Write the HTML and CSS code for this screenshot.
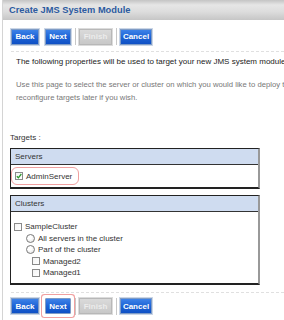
FILE: index.html
```html
<!DOCTYPE html>
<html lang="en">
<head>
    <meta charset="UTF-8">
    <title>Create JMS System Module</title>
    <link rel="stylesheet" href="styles.css">
</head>
<body>
    <div class="page">
        <div class="page-header">
            <h1 class="page-title">Create JMS System Module</h1>
        </div>

        <div class="button-bar">
            <button class="wiz-button">Back</button>
            <button class="wiz-button">Next</button>
            <span class="button-sep"></span>
            <button class="wiz-button disabled">Finish</button>
            <span class="button-sep"></span>
            <button class="wiz-button">Cancel</button>
        </div>

        <p class="intro">The following properties will be used to target your new JMS system module</p>
        <p class="help">Use this page to select the server or cluster on which you would like to deploy the<br>reconfigure targets later if you wish.</p>

        <div class="targets-label">Targets :</div>

        <div class="target-box">
            <div class="target-head">Servers</div>
            <div class="target-body servers">
                <div class="target-row highlight">
                    <span class="check">
                        <svg width="6" height="6" viewBox="0 0 6 6"><path d="M0.8 3.2 L2.4 4.8 L5.3 1" fill="none" stroke="#2d9a2d" stroke-width="1.3"/></svg>
                    </span>
                    AdminServer
                </div>
            </div>
        </div>

        <div class="target-box">
            <div class="target-head">Clusters</div>
            <div class="target-body">
                <div class="target-row"><span class="check"></span> SampleCluster</div>
                <div class="target-row level-1"><span class="radio"></span> All servers in the cluster</div>
                <div class="target-row level-1"><span class="radio"></span> Part of the cluster</div>
                <div class="target-row level-2"><span class="check"></span> Managed2</div>
                <div class="target-row level-2"><span class="check"></span> Managed1</div>
            </div>
        </div>

        <div class="button-bar bottom">
            <button class="wiz-button">Back</button>
            <button class="wiz-button circled">Next</button>
            <span class="button-sep"></span>
            <button class="wiz-button disabled">Finish</button>
            <span class="button-sep"></span>
            <button class="wiz-button">Cancel</button>
        </div>
    </div>
</body>
</html>
```

FILE: styles.css
```css
* {
    margin: 0;
    padding: 0;
    box-sizing: border-box;
}

body {
    font-family: "Liberation Sans", Arial, sans-serif;
    font-size: 8px;
    color: #333;
    background: #fff;
    width: 284px;
    height: 320px;
    overflow: hidden;
}

.page {
    margin-left: 2px;
    border-left: 1px solid #d4d4d4;
    height: 320px;
    overflow: hidden;
}

.page-header {
    height: 20px;
    background: linear-gradient(to bottom, #c4c4c4 0%, #e6e6e6 25%, #dcdcdc 60%, #c6c6c6 100%);
    display: flex;
    align-items: center;
    padding-left: 6px;
}

.page-title {
    font-size: 9.3px;
    font-weight: bold;
    color: #2c5aa0;
    white-space: nowrap;
}

.button-bar {
    display: flex;
    align-items: center;
    margin: 8px 0 0 8px;
    padding-bottom: 6px;
    border-bottom: 1px dashed #e0e0e0;
}

.wiz-button {
    height: 16px;
    margin-right: 6px;
    font-family: inherit;
    font-size: 8px;
    font-weight: bold;
    color: #fff;
    background: linear-gradient(to bottom, #3d82e8 0%, #1e64d6 50%, #0f50c4 100%);
    border: 1px solid #7f9cc6;
    outline: 1px solid #cbd6e6;
}

.wiz-button:nth-of-type(1) {
    width: 28px;
}

.wiz-button:nth-of-type(2) {
    width: 26px;
}

.wiz-button:nth-of-type(3) {
    width: 33px;
}

.wiz-button:nth-of-type(4) {
    width: 32px;
}

.wiz-button.disabled {
    color: #ececec;
    background: linear-gradient(to bottom, #dadada 0%, #c8c8c8 100%);
    border-color: #b8b8b8;
    outline-color: #dcdcdc;
}

.button-sep {
    width: 1px;
    height: 17px;
    margin-right: 3px;
    margin-left: -2px;
    background: #c8c8c8;
}

.intro {
    margin: 5px 0 0 13px;
    white-space: nowrap;
    color: #222;
}

.help {
    margin: 12px 0 0 13px;
    white-space: nowrap;
    font-size: 7.7px;
    color: #777;
    line-height: 13px;
}

.targets-label {
    margin: 29px 0 0 7px;
    color: #333;
}

.target-box {
    width: 250px;
    margin: 6px 0 0 7px;
    border: 1px solid #222;
    border-right: 2px solid #999;
    border-bottom-width: 2px;
}

.target-head {
    height: 16px;
    line-height: 15px;
    padding-left: 4px;
    background: #cfdcf0;
    border-bottom: 1px solid #333;
    color: #333;
}

.target-body {
    display: flex;
    flex-direction: column;
    padding: 9px 0 4px 3px;
}

.target-body.servers {
    padding: 2px 0 2px 0;
}

.target-row {
    display: flex;
    align-items: center;
    gap: 3px;
    height: 11.5px;
    color: #333;
}

.target-row.level-1 {
    padding-left: 12px;
}

.target-row.level-2 {
    padding-left: 18px;
}

.check {
    width: 8px;
    height: 8px;
    border: 1px solid #8a8a8a;
    background: linear-gradient(135deg, #f4f4f4, #fff);
    display: flex;
    align-items: center;
    justify-content: center;
}

.radio {
    width: 9px;
    height: 9px;
    border: 1px solid #7a7a7a;
    border-radius: 50%;
    background: radial-gradient(circle at 40% 35%, #fff 30%, #dcdcdc 100%);
}

.highlight {
    align-self: flex-start;
    height: 18px;
    width: 68px;
    padding-left: 3px;
    border: 1px solid #f0a0a0;
    border-radius: 6px;
}

.button-bar.bottom {
    margin-top: 7px;
    padding-bottom: 0;
    border-bottom: 0;
    border-top: 1px dashed #e0e0e0;
    padding-top: 5px;
}

.wiz-button.circled {
    box-shadow: 0 0 0 3px #fff, 0 0 0 4px #f0a0a0;
    outline: none;
    border-radius: 1px;
}
```
